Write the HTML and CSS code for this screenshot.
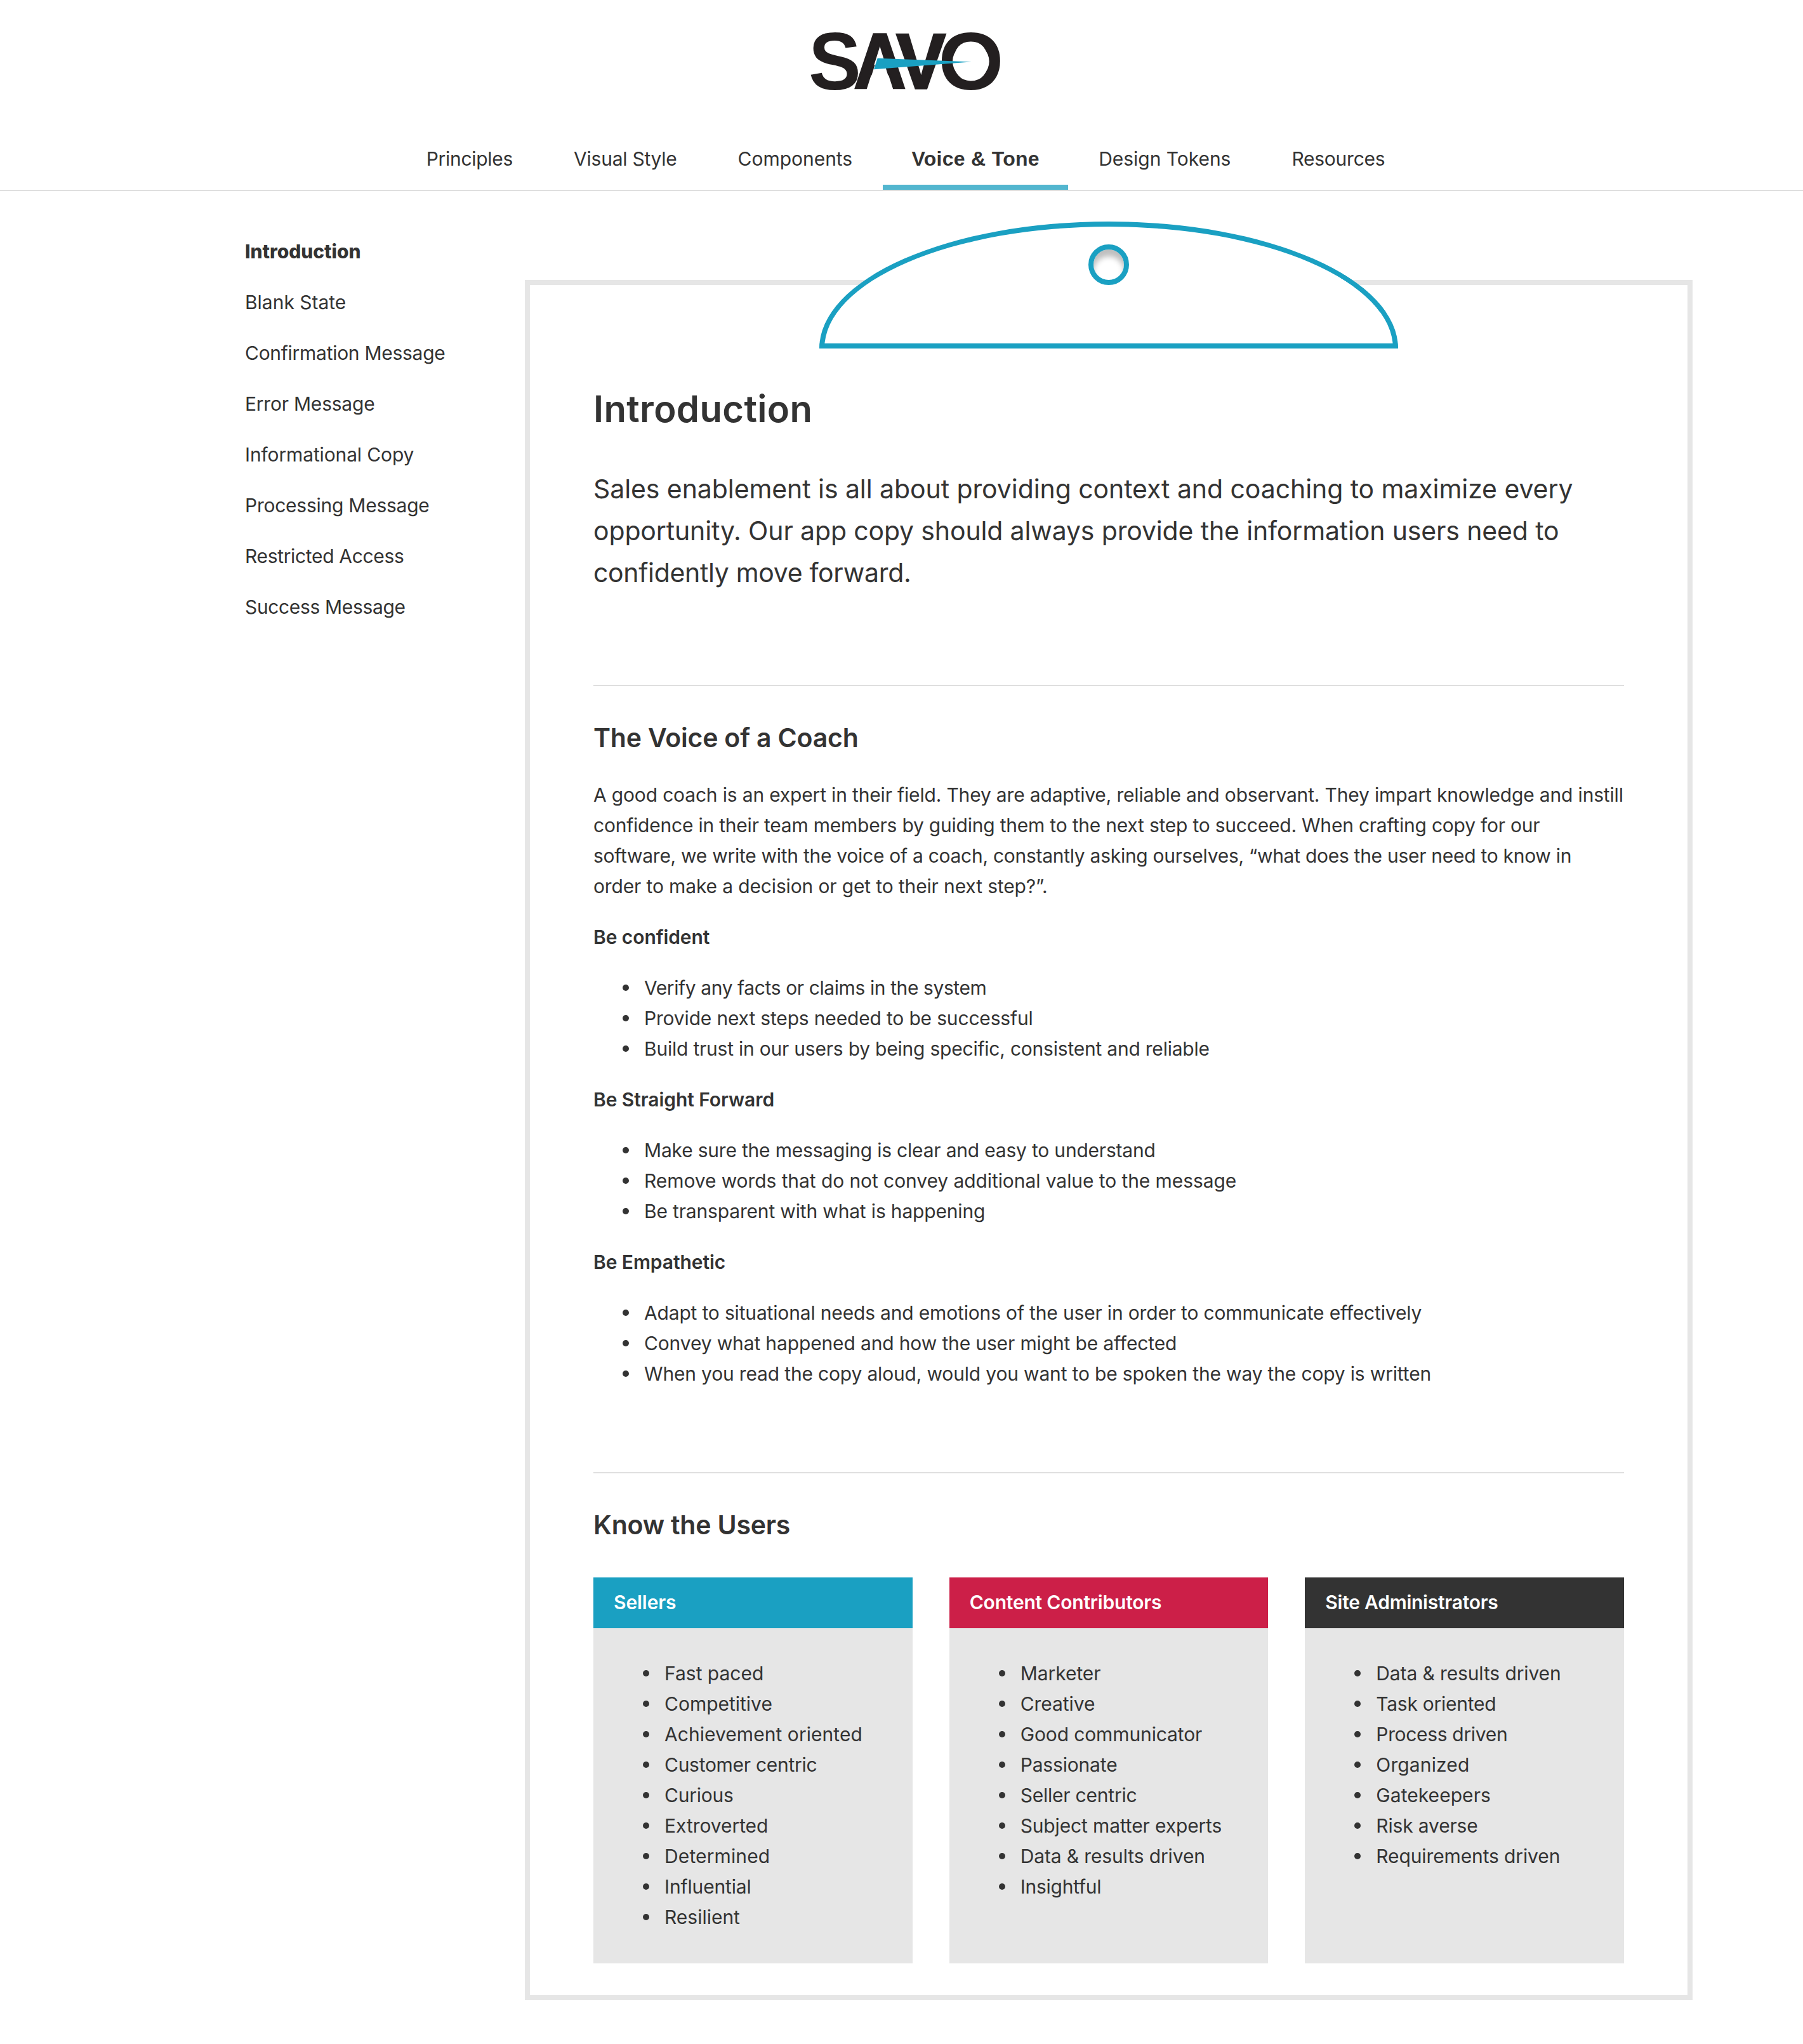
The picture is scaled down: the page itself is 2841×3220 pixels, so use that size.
FILE: index.html
```
<!DOCTYPE html>
<html lang="en">
<head>
<meta charset="utf-8">
<title>Voice &amp; Tone</title>
<link rel="stylesheet" href="styles.css">
</head>
<body>
<header class="site-header">
  <svg class="logo" viewBox="0 0 1080 390" role="img" aria-label="SAVO">
    <g class="logo-letters">
      <text class="round" transform="translate(72 333) scale(.97 1)">S</text>
      <text class="angled" transform="translate(286.5 328) scale(.919 1)">A</text>
      <path class="logo-cut" d="M409 141 349.500 333v8H469v-8z"/>
      <text class="angled" transform="translate(487.600 328) scale(.942 1)">V</text>
      <text class="round" transform="translate(685.700 333) scale(1.034 1)">O</text>
      <circle class="logo-cut" cx="839.500" cy="200.500" r="86.500"/>
    </g>
    <path class="logo-beam" d="M398 185 842 202 381 238z"/>
  </svg>
  <nav class="tabs">
    <a class="tab n28">Principles</a>
    <a class="tab n25">Visual Style</a>
    <a class="tab n03">Components</a>
    <a class="tab tab-active">Voice &amp; Tone</a>
    <a class="tab n03">Design Tokens</a>
    <a class="tab n25">Resources</a>
  </nav>
</header>
<div class="layout">
  <nav class="side">
    <a class="side-active n05">Introduction</a>
    <a class="n01">Blank State</a>
    <a class="n28">Confirmation Message</a>
    <a class="n22">Error Message</a>
    <a class="n14">Informational Copy</a>
    <a class="n25">Processing Message</a>
    <a class="n33">Restricted Access</a>
    <a class="n35">Success Message</a>
  </nav>
  <main class="board">
    <div class="clip"><div class="clip-hole"></div></div>
    <h1>Introduction</h1>
    <p class="lead">
      <span class="n08">Sales enablement is all about providing context and coaching to maximize every</span>
      <span class="n15">opportunity. Our app copy should always provide the information users need to</span>
      <span class="n33">confidently move forward.</span>
    </p>
    <hr>
    <h2>The Voice of a Coach</h2>
    <p class="copy">
      <span class="n17">A good coach is an expert in their field. They are adaptive, reliable and observant. They impart knowledge and instill</span>
      <span class="n22">confidence in their team members by guiding them to the next step to succeed. When crafting copy for our</span>
      <span class="n28">software, we write with the voice of a coach, constantly asking ourselves, “what does the user need to know in</span>
      <span class="n14">order to make a decision or get to their next step?”.</span>
    </p>
    <h3>Be confident</h3>
    <ul>
      <li class="n40">Verify any facts or claims in the system</li>
      <li class="n17">Provide next steps needed to be successful</li>
      <li class="n22">Build trust in our users by being specific, consistent and reliable</li>
    </ul>
    <h3>Be Straight Forward</h3>
    <ul>
      <li class="n20">Make sure the messaging is clear and easy to understand</li>
      <li class="n08">Remove words that do not convey additional value to the message</li>
      <li class="n17">Be transparent with what is happening</li>
    </ul>
    <h3>Be Empathetic</h3>
    <ul>
      <li class="n17">Adapt to situational needs and emotions of the user in order to communicate effectively</li>
      <li class="n14">Convey what happened and how the user might be affected</li>
      <li class="n17">When you read the copy aloud, would you want to be spoken the way the copy is written</li>
    </ul>
    <hr class="hr-users">
    <h2>Know the Users</h2>
    <div class="cards">
      <section class="card card-sellers">
        <h4 class="n08">Sellers</h4>
        <ul>
          <li class="n01">Fast paced</li>
          <li class="n01">Competitive</li>
          <li class="p05">Achievement oriented</li>
          <li class="n28">Customer centric</li>
          <li class="n25">Curious</li>
          <li class="n05">Extroverted</li>
          <li class="p12">Determined</li>
          <li class="n15">Influential</li>
          <li class="n01">Resilient</li>
        </ul>
      </section>
      <section class="card card-contributors">
        <h4 class="n20">Content Contributors</h4>
        <ul>
          <li class="n05">Marketer</li>
          <li class="n05">Creative</li>
          <li class="n12">Good communicator</li>
          <li class="n17">Passionate</li>
          <li class="n22">Seller centric</li>
          <li class="n14">Subject matter experts</li>
          <li class="n12">Data &amp; results driven</li>
          <li class="n25">Insightful</li>
        </ul>
      </section>
      <section class="card card-admins">
        <h4 class="n25">Site Administrators</h4>
        <ul>
          <li class="n12">Data &amp; results driven</li>
          <li class="n25">Task oriented</li>
          <li class="n33">Process driven</li>
          <li class="p12">Organized</li>
          <li class="p05">Gatekeepers</li>
          <li class="n17">Risk averse</li>
          <li class="n12">Requirements driven</li>
        </ul>
      </section>
    </div>
  </main>
</div>
</body>
</html>
```
FILE: styles.css
```
* { box-sizing: border-box; }
body {
  margin: 0;
  background: #fff;
  color: #333;
  font: 400 30px/48px Inter, "Liberation Sans", sans-serif;
  letter-spacing: -.2px;
}
h1, h2, h3, h4, p, ul { margin: 0; padding: 0; font-weight: 600; }
p, ul { font-weight: 400; }
ul { list-style: none; }

.site-header {
  display: flex;
  flex-direction: column;
  align-items: center;
  height: 301px;
  padding: 30px 0 0 13px;
  border-bottom: 2px solid #dfdfdf;
}
.logo { width: 360px; height: 130px; margin: 0 0 66px 6px; }
.logo-letters { fill: #231f20; font-family: "Liberation Sans", Arial, sans-serif; font-weight: 700; letter-spacing: 0; }
.round { font-size: 384px; }
.angled { font-size: 370px; stroke: #231f20; stroke-width: 10px; }
.logo-cut { fill: #fff; }
.logo-beam { fill: #1aa0c2; }
.tabs { display: flex; }
.tab { padding: 0 48px 17px; border-bottom: 8px solid transparent; white-space: nowrap; }
.tab-active {
  width: 292px;
  padding: 0 0 17px;
  border-color: #53b6cf;
  font: 700 32px/48px "Liberation Sans", Arial, sans-serif;
  letter-spacing: .3px;
  text-align: center;
}

.layout { display: flex; align-items: flex-start; }
.side {
  display: flex;
  flex-direction: column;
  gap: 32px;
  width: 827px;
  padding: 71px 0 0 386px;
}
.side a { align-self: flex-start; }
.side-active { font-weight: 800; }

.board {
  position: relative;
  width: 1840px;
  height: 2710px;
  margin-top: 140px;
  padding: 155px 100px 50px;
  border: 8px solid #e6e6e6;
}
.clip {
  position: absolute;
  top: -100px;
  left: 456px;
  display: flex;
  justify-content: center;
  width: 912px;
  height: 200px;
  padding-top: 28px;
  border: 8px solid #1aa0c2;
  border-radius: 50% 50% 0 0 / 100% 100% 0 0;
  background: #fff;
}
.clip-hole {
  width: 64px;
  height: 64px;
  border: 8px solid #1aa0c2;
  border-radius: 50%;
  box-shadow: inset 0 11px 8px #bfbfbf;
}
h1 { font-size: 58px; line-height: 80px; letter-spacing: .35px; }
.lead { margin-top: 53px; font-size: 41px; line-height: 66px; }
.lead span, .copy span { display: table; white-space: nowrap; }
hr { height: 2px; margin: 144px 0 53px; border: 0; background: #dfdfdf; }
.hr-users { margin-top: 131px; }
h2 { font-size: 41px; line-height: 56px; }
.copy { margin-top: 38px; }
h3 { margin: 32px 0; font-size: 30px; letter-spacing: -.08px; }
li { padding-left: 80px; white-space: nowrap; }
li::before {
  content: "";
  display: inline-block;
  width: 10px;
  height: 10px;
  margin: 0 24px 0 -34px;
  border-radius: 50%;
  background: #333;
  vertical-align: 6px;
}

.cards { display: grid; grid-template-columns: repeat(3, 1fr); gap: 58px; margin-top: 55px; }
.card { height: 608px; background: #e6e6e6; }
.card h4 { height: 80px; padding: 15px 32px; color: #fff; font-size: 30px; }
.card ul { padding: 47px 32px; }
.card-sellers h4 { background: #1aa0c2; }
.card-contributors h4 { background: #cc1f48; }
.card-admins h4 { background: #333; }

/* Tracking, in hundredths of a pixel: n = tighter, p = looser */
.n01 { letter-spacing: -.01px; }
.n03 { letter-spacing: -.03px; }
.n05 { letter-spacing: -.05px; }
.n08 { letter-spacing: -.08px; }
.n12 { letter-spacing: -.12px; }
.n14 { letter-spacing: -.14px; }
.n15 { letter-spacing: -.15px; }
.n17 { letter-spacing: -.17px; }
.n20 { letter-spacing: -.2px; }
.n22 { letter-spacing: -.22px; }
.n25 { letter-spacing: -.25px; }
.n28 { letter-spacing: -.28px; }
.n33 { letter-spacing: -.33px; }
.n35 { letter-spacing: -.35px; }
.n40 { letter-spacing: -.4px; }
.p05 { letter-spacing: .05px; }
.p12 { letter-spacing: .12px; }
```
